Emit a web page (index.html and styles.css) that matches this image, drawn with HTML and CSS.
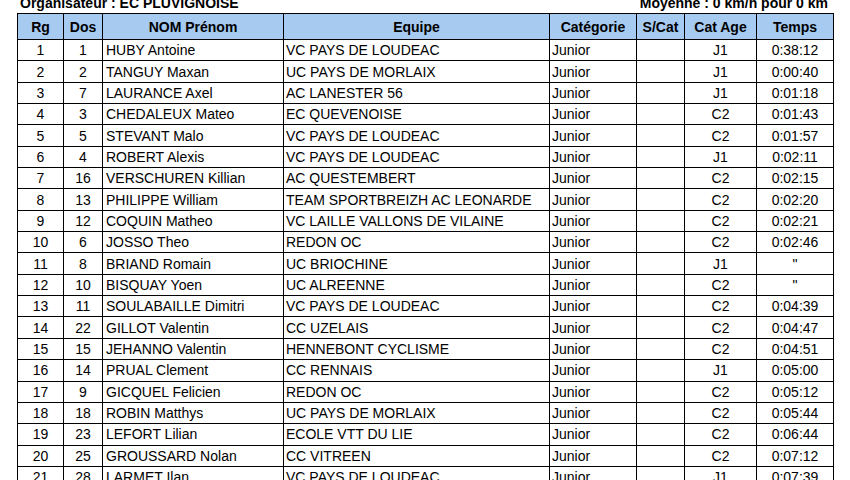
FILE: index.html
```html
<!DOCTYPE html>
<html lang="fr">
<head>
<meta charset="utf-8">
<title>Classement</title>
<link rel="stylesheet" href="styles.css">
</head>
<body>
<div class="page">
  <div class="title-bar">
    <span>Organisateur : EC PLUVIGNOISE</span>
    <span>Moyenne : 0 km/h pour 0 km</span>
  </div>
  <table class="results">
    <colgroup>
      <col class="c-rg"><col class="c-dos"><col class="c-nom"><col class="c-eq"><col class="c-cat"><col class="c-scat"><col class="c-age"><col class="c-tps">
    </colgroup>
    <thead>
      <tr><th>Rg</th><th>Dos</th><th>NOM Prénom</th><th>Equipe</th><th>Catégorie</th><th>S/Cat</th><th>Cat Age</th><th>Temps</th></tr>
    </thead>
    <tbody>
      <tr><td class="ctr">1</td><td class="ctr">1</td><td class="nom">HUBY Antoine</td><td class="eq">VC PAYS DE LOUDEAC</td><td class="cat">Junior</td><td></td><td class="ctr">J1</td><td class="ctr">0:38:12</td></tr>
      <tr><td class="ctr">2</td><td class="ctr">2</td><td class="nom">TANGUY Maxan</td><td class="eq">UC PAYS DE MORLAIX</td><td class="cat">Junior</td><td></td><td class="ctr">J1</td><td class="ctr">0:00:40</td></tr>
      <tr><td class="ctr">3</td><td class="ctr">7</td><td class="nom">LAURANCE Axel</td><td class="eq">AC LANESTER 56</td><td class="cat">Junior</td><td></td><td class="ctr">J1</td><td class="ctr">0:01:18</td></tr>
      <tr><td class="ctr">4</td><td class="ctr">3</td><td class="nom">CHEDALEUX Mateo</td><td class="eq">EC QUEVENOISE</td><td class="cat">Junior</td><td></td><td class="ctr">C2</td><td class="ctr">0:01:43</td></tr>
      <tr><td class="ctr">5</td><td class="ctr">5</td><td class="nom">STEVANT Malo</td><td class="eq">VC PAYS DE LOUDEAC</td><td class="cat">Junior</td><td></td><td class="ctr">C2</td><td class="ctr">0:01:57</td></tr>
      <tr><td class="ctr">6</td><td class="ctr">4</td><td class="nom">ROBERT Alexis</td><td class="eq">VC PAYS DE LOUDEAC</td><td class="cat">Junior</td><td></td><td class="ctr">J1</td><td class="ctr">0:02:11</td></tr>
      <tr><td class="ctr">7</td><td class="ctr">16</td><td class="nom">VERSCHUREN Killian</td><td class="eq">AC QUESTEMBERT</td><td class="cat">Junior</td><td></td><td class="ctr">C2</td><td class="ctr">0:02:15</td></tr>
      <tr><td class="ctr">8</td><td class="ctr">13</td><td class="nom">PHILIPPE William</td><td class="eq">TEAM SPORTBREIZH AC LEONARDE</td><td class="cat">Junior</td><td></td><td class="ctr">C2</td><td class="ctr">0:02:20</td></tr>
      <tr><td class="ctr">9</td><td class="ctr">12</td><td class="nom">COQUIN Matheo</td><td class="eq">VC LAILLE VALLONS DE VILAINE</td><td class="cat">Junior</td><td></td><td class="ctr">C2</td><td class="ctr">0:02:21</td></tr>
      <tr><td class="ctr">10</td><td class="ctr">6</td><td class="nom">JOSSO Theo</td><td class="eq">REDON OC</td><td class="cat">Junior</td><td></td><td class="ctr">C2</td><td class="ctr">0:02:46</td></tr>
      <tr><td class="ctr">11</td><td class="ctr">8</td><td class="nom">BRIAND Romain</td><td class="eq">UC BRIOCHINE</td><td class="cat">Junior</td><td></td><td class="ctr">J1</td><td class="ctr">"</td></tr>
      <tr><td class="ctr">12</td><td class="ctr">10</td><td class="nom">BISQUAY Yoen</td><td class="eq">UC ALREENNE</td><td class="cat">Junior</td><td></td><td class="ctr">C2</td><td class="ctr">"</td></tr>
      <tr><td class="ctr">13</td><td class="ctr">11</td><td class="nom">SOULABAILLE Dimitri</td><td class="eq">VC PAYS DE LOUDEAC</td><td class="cat">Junior</td><td></td><td class="ctr">C2</td><td class="ctr">0:04:39</td></tr>
      <tr><td class="ctr">14</td><td class="ctr">22</td><td class="nom">GILLOT Valentin</td><td class="eq">CC UZELAIS</td><td class="cat">Junior</td><td></td><td class="ctr">C2</td><td class="ctr">0:04:47</td></tr>
      <tr><td class="ctr">15</td><td class="ctr">15</td><td class="nom">JEHANNO Valentin</td><td class="eq">HENNEBONT CYCLISME</td><td class="cat">Junior</td><td></td><td class="ctr">C2</td><td class="ctr">0:04:51</td></tr>
      <tr><td class="ctr">16</td><td class="ctr">14</td><td class="nom">PRUAL Clement</td><td class="eq">CC RENNAIS</td><td class="cat">Junior</td><td></td><td class="ctr">J1</td><td class="ctr">0:05:00</td></tr>
      <tr><td class="ctr">17</td><td class="ctr">9</td><td class="nom">GICQUEL Felicien</td><td class="eq">REDON OC</td><td class="cat">Junior</td><td></td><td class="ctr">C2</td><td class="ctr">0:05:12</td></tr>
      <tr><td class="ctr">18</td><td class="ctr">18</td><td class="nom">ROBIN Matthys</td><td class="eq">UC PAYS DE MORLAIX</td><td class="cat">Junior</td><td></td><td class="ctr">C2</td><td class="ctr">0:05:44</td></tr>
      <tr><td class="ctr">19</td><td class="ctr">23</td><td class="nom">LEFORT Lilian</td><td class="eq">ECOLE VTT DU LIE</td><td class="cat">Junior</td><td></td><td class="ctr">C2</td><td class="ctr">0:06:44</td></tr>
      <tr><td class="ctr">20</td><td class="ctr">25</td><td class="nom">GROUSSARD Nolan</td><td class="eq">CC VITREEN</td><td class="cat">Junior</td><td></td><td class="ctr">C2</td><td class="ctr">0:07:12</td></tr>
      <tr><td class="ctr">21</td><td class="ctr">28</td><td class="nom">LARMET Ilan</td><td class="eq">VC PAYS DE LOUDEAC</td><td class="cat">Junior</td><td></td><td class="ctr">J1</td><td class="ctr">0:07:39</td></tr>
    </tbody>
  </table>
</div>
</body>
</html>
```

FILE: styles.css
```css
html, body {
  margin: 0;
  padding: 0;
  background: #ffffff;
}

body {
  font-family: "Liberation Sans", Arial, sans-serif;
  font-size: 14px;
  color: #000000;
  overflow: hidden;
}

.page {
  padding-left: 17px;
  width: 816px;
}

.title-bar {
  display: flex;
  justify-content: space-between;
  font-weight: bold;
  line-height: 16px;
  margin-top: -5px;
  margin-bottom: 2px;
  padding: 0 5px 0 3px;
}

.results {
  border-collapse: collapse;
  table-layout: fixed;
  width: 816px;
}

.c-rg { width: 46px; }
.c-dos { width: 39px; }
.c-nom { width: 181px; }
.c-eq { width: 266px; }
.c-cat { width: 87px; }
.c-scat { width: 48px; }
.c-age { width: 72px; }
.c-tps { width: 77px; }

.results th,
.results td {
  border: 1px solid #000000;
  padding: 0;
  white-space: nowrap;
  overflow: hidden;
}

.results th {
  background: #a6caf0;
  font-weight: bold;
  text-align: center;
  height: 25px;
}

.results tbody tr {
  height: 21.35px;
}

.results td {
  line-height: 16px;
}

.ctr { text-align: center; }
.nom { padding-left: 3px !important; }
.eq { padding-left: 2px !important; }
.cat { padding-left: 2px !important; }
```
